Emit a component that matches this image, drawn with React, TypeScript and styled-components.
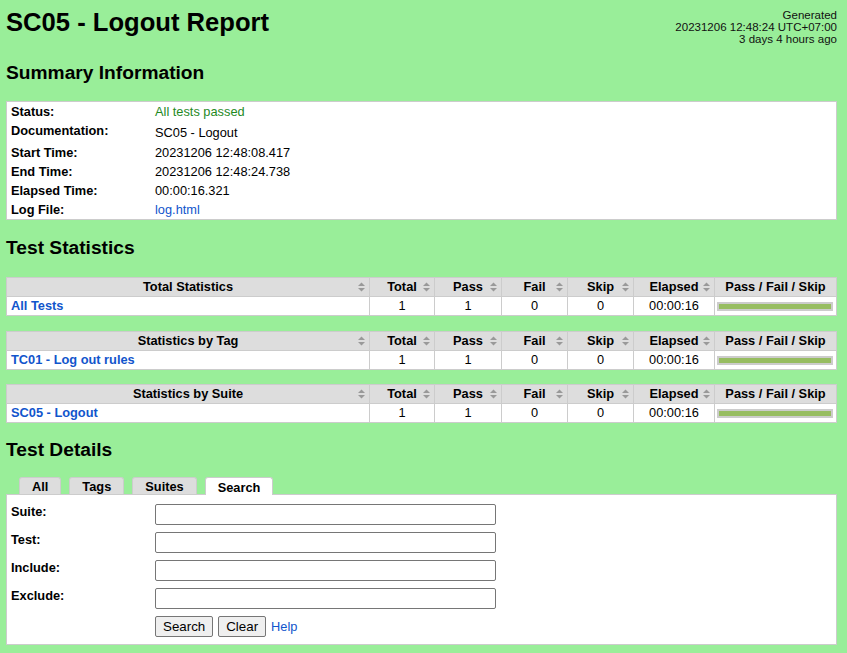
import React from "react";
import styled, { createGlobalStyle } from "styled-components";

const GlobalStyle = createGlobalStyle`
  html, body { margin: 0; padding: 0; }
  body {
    background: #99ee99;
    color: #000;
    font-family: "Liberation Sans", Arial, Helvetica, sans-serif;
    font-size: 12.8px;
  }
`;

const Page = styled.div`
  padding: 0 10px 8px 6px;
`;

const Header = styled.header`
  display: flex;
  justify-content: space-between;
  align-items: flex-start;
`;

const Title = styled.h1`
  margin: 8px 0 0;
  font-size: 25.6px;
  line-height: 29px;
  font-weight: bold;
`;

const Generated = styled.div`
  margin-top: 9px;
  font-size: 11.52px;
  line-height: 12px;
  text-align: right;
  white-space: nowrap;
  color: #111;
`;

const SectionTitle = styled.h2<{ $top: number; $bottom: number }>`
  margin: ${(p) => p.$top}px 0 ${(p) => p.$bottom}px;
  font-size: 19.2px;
  line-height: 22px;
  font-weight: bold;
`;

const SummaryBox = styled.div`
  display: grid;
  grid-template-columns: 145px 1fr;
  background: #fff;
  border: 1px solid #ccc;
`;

const SumLabel = styled.div`
  font-weight: bold;
  padding: 2px 4px;
  line-height: 15px;
`;

const SumValue = styled.div<{ $tall?: boolean; $pass?: boolean }>`
  padding: ${(p) => (p.$tall ? "4px 3px 3px" : "2px 3px")};
  line-height: 15px;
  color: ${(p) => (p.$pass ? "#1f8a1f" : "#000")};
`;

const Link = styled.a<{ $bold?: boolean }>`
  color: #1155cc;
  text-decoration: none;
  font-weight: ${(p) => (p.$bold ? "bold" : "normal")};
`;

const StatTable = styled.table<{ $gap: number }>`
  width: 100%;
  border-collapse: collapse;
  table-layout: fixed;
  background: #fff;
  border: 1px solid #ccc;
  margin-bottom: ${(p) => p.$gap}px;
`;

const Th = styled.th`
  position: relative;
  background: #ddd;
  font-weight: bold;
  text-align: center;
  padding: 1px 3px 2px;
  line-height: 15px;
  border: 1px solid #ccc;
  white-space: nowrap;
`;

const Td = styled.td<{ $align?: "left" | "center" }>`
  padding: 1px 3px 2px ${(p) => (p.$align === "left" ? "4px" : "3px")};
  line-height: 15px;
  text-align: ${(p) => p.$align ?? "center"};
  border: 1px solid #ccc;
  white-space: nowrap;
`;

const GraphTd = styled.td`
  padding: 0 3px 0 2px;
  border: 1px solid #ccc;
  vertical-align: middle;
`;

const Graph = styled.div`
  height: 9px;
  box-sizing: border-box;
  border: 2px solid #ccc;
  background: #fff;
`;

const PassBar = styled.div`
  height: 100%;
  background: #97bd61;
`;

const SortIconWrap = styled.span`
  position: absolute;
  right: 4px;
  top: 50%;
  transform: translateY(-50%);
  width: 7px;
  height: 10px;
  display: block;
`;

const SortIcon = () => (
  <SortIconWrap>
    <svg width="7" height="10" viewBox="0 0 7 10" style={{ display: "block" }}>
      <polygon points="0,4 3.5,0.5 7,4" fill="#999" />
      <polygon points="0,6 3.5,9.5 7,6" fill="#999" />
    </svg>
  </SortIconWrap>
);

const Tabs = styled.div`
  display: flex;
  align-items: flex-end;
  gap: 8px;
  padding-left: 13px;
  height: 17px;
`;

const Tab = styled.div<{ $active?: boolean }>`
  position: relative;
  z-index: 1;
  box-sizing: border-box;
  height: ${(p) => (p.$active ? "18px" : "17px")};
  margin-bottom: ${(p) => (p.$active ? "-1px" : "0")};
  padding: ${(p) => (p.$active ? "2px" : "1px")} 12px 0;
  line-height: 15px;
  border: 1px solid #ccc;
  border-bottom: none;
  border-radius: 3px 3px 0 0;
  background: ${(p) => (p.$active ? "#fff" : "#ddd")};
  font-weight: bold;
`;

const Panel = styled.div`
  background: #fff;
  border: 1px solid #ccc;
  padding: 7px 4px 2px;
`;

const SearchForm = styled.div`
  display: grid;
  grid-template-columns: 144px auto;
  grid-auto-rows: 28px;
  justify-content: start;
`;

const FormLabel = styled.div`
  font-weight: bold;
  padding-top: 2px;
  line-height: 15px;
`;

const TextInput = styled.input`
  width: 341px;
  height: 21px;
  box-sizing: border-box;
  margin: 2px 0 0;
  border: 1px solid #767676;
  border-radius: 2px;
  padding: 1px 2px;
  font-size: 13.33px;
  background: #fff;
`;

const ButtonRow = styled.div`
  display: flex;
  align-items: center;
  gap: 5px;
  margin-top: 2px;
  height: 21px;
`;

const Button = styled.button`
  height: 21px;
  box-sizing: border-box;
  padding: 1px 7px;
  font-family: "Liberation Sans", Arial, sans-serif;
  font-size: 13.33px;
  color: #000;
  background: #efefef;
  border: 1px solid #767676;
  border-radius: 2px;
`;

const HelpLink = styled(Link)`
  font-size: 12.8px;
`;

const StatsTable: React.FC<{ title: string; name: string; gap: number }> = ({ title, name, gap }) => (
  <StatTable $gap={gap}>
    <colgroup>
      <col />
      <col style={{ width: 65 }} />
      <col style={{ width: 67 }} />
      <col style={{ width: 66 }} />
      <col style={{ width: 66 }} />
      <col style={{ width: 81 }} />
      <col style={{ width: 122 }} />
    </colgroup>
    <thead>
      <tr>
        <Th>
          {title}
          <SortIcon />
        </Th>
        <Th>
          Total
          <SortIcon />
        </Th>
        <Th>
          Pass
          <SortIcon />
        </Th>
        <Th>
          Fail
          <SortIcon />
        </Th>
        <Th>
          Skip
          <SortIcon />
        </Th>
        <Th>
          Elapsed
          <SortIcon />
        </Th>
        <Th>Pass / Fail / Skip</Th>
      </tr>
    </thead>
    <tbody>
      <tr>
        <Td $align="left">
          <Link $bold href="#">
            {name}
          </Link>
        </Td>
        <Td>1</Td>
        <Td>1</Td>
        <Td>0</Td>
        <Td>0</Td>
        <Td>00:00:16</Td>
        <GraphTd>
          <Graph>
            <PassBar style={{ width: "100%" }} />
          </Graph>
        </GraphTd>
      </tr>
    </tbody>
  </StatTable>
);

const summary: { label: string; value: React.ReactNode; tall?: boolean; pass?: boolean }[] = [
  { label: "Status:", value: "All tests passed", pass: true },
  { label: "Documentation:", value: "SC05 - Logout", tall: true },
  { label: "Start Time:", value: "20231206 12:48:08.417" },
  { label: "End Time:", value: "20231206 12:48:24.738" },
  { label: "Elapsed Time:", value: "00:00:16.321" },
  { label: "Log File:", value: <Link href="#">log.html</Link> },
];

export default function App() {
  return (
    <>
      <GlobalStyle />
      <Page>
        <Header>
          <Title>SC05 - Logout Report</Title>
          <Generated>
            Generated
            <br />
            20231206 12:48:24 UTC+07:00
            <br />
            3 days 4 hours ago
          </Generated>
        </Header>

        <SectionTitle $top={17} $bottom={17}>Summary Information</SectionTitle>
        <SummaryBox>
          {summary.map((r) => (
            <React.Fragment key={r.label}>
              <SumLabel>{r.label}</SumLabel>
              <SumValue $tall={r.tall} $pass={r.pass}>
                {r.value}
              </SumValue>
            </React.Fragment>
          ))}
        </SummaryBox>

        <SectionTitle $top={17} $bottom={18}>Test Statistics</SectionTitle>
        <StatsTable title="Total Statistics" name="All Tests" gap={15} />
        <StatsTable title="Statistics by Tag" name="TC01 - Log out rules" gap={14} />
        <StatsTable title="Statistics by Suite" name="SC05 - Logout" gap={0} />

        <SectionTitle $top={16} $bottom={16}>Test Details</SectionTitle>
        <Tabs>
          <Tab>All</Tab>
          <Tab>Tags</Tab>
          <Tab>Suites</Tab>
          <Tab $active>Search</Tab>
        </Tabs>
        <Panel>
          <SearchForm>
            <FormLabel>Suite:</FormLabel>
            <div>
              <TextInput type="text" />
            </div>
            <FormLabel>Test:</FormLabel>
            <div>
              <TextInput type="text" />
            </div>
            <FormLabel>Include:</FormLabel>
            <div>
              <TextInput type="text" />
            </div>
            <FormLabel>Exclude:</FormLabel>
            <div>
              <TextInput type="text" />
            </div>
            <div />
            <ButtonRow>
              <Button type="button">Search</Button>
              <Button type="button">Clear</Button>
              <HelpLink href="#">Help</HelpLink>
            </ButtonRow>
          </SearchForm>
        </Panel>
      </Page>
    </>
  );
}
